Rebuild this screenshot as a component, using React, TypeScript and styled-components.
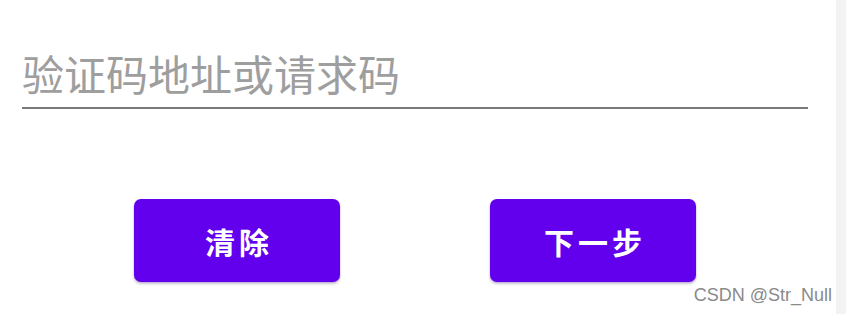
import React from "react";
import styled, { createGlobalStyle } from "styled-components";

const GlobalStyle = createGlobalStyle`
  html, body {
    margin: 0;
    padding: 0;
    background: #ffffff;
  }
  body {
    font-family: "Roboto", "Noto Sans CJK SC", sans-serif;
  }
`;

const App: React.FC = () => {
  return (
    <>
      <GlobalStyle />
      <Page>
        <Screen>
          <Field>
            <Placeholder>验证码地址或请求码</Placeholder>
            <Underline />
          </Field>
          <ButtonRow>
            <ActionButton>清除</ActionButton>
            <ActionButton>下一步</ActionButton>
          </ButtonRow>
          <Watermark>CSDN @Str_Null</Watermark>
        </Screen>
        <Scrollbar />
      </Page>
    </>
  );
};

export default App;

const Page = styled.div`
  display: flex;
  width: 846px;
  height: 314px;
  overflow: hidden;
`;

const Screen = styled.div`
  position: relative;
  flex: 1;
  display: flex;
  flex-direction: column;
  background: #ffffff;
`;

const Scrollbar = styled.div`
  width: 10px;
  background: #f3f3f3;
`;

const Field = styled.div`
  margin: 49px 0 0 22px;
  width: 786px;
`;

const Placeholder = styled.div`
  font-family: "Noto Sans CJK SC", sans-serif;
  font-size: 42px;
  line-height: 48px;
  color: #9e9e9e;
  padding-bottom: 10px;
`;

const Underline = styled.div`
  height: 2px;
  background: #7a7a7a;
`;

const ButtonRow = styled.div`
  display: flex;
  gap: 150px;
  padding-left: 134px;
  margin-top: 90px;
`;

const ActionButton = styled.button`
  width: 206px;
  height: 83px;
  border: none;
  border-radius: 7px;
  background: #6200ee;
  color: #ffffff;
  font-family: "Noto Sans CJK SC", sans-serif;
  font-size: 30px;
  font-weight: 700;
  letter-spacing: 4px;
  padding: 0 0 0 4px;
  box-shadow: 0 2px 3px rgba(0, 0, 0, 0.18), 0 1px 2px rgba(98, 0, 238, 0.2);
  cursor: pointer;
`;

const Watermark = styled.div`
  position: absolute;
  right: 4px;
  bottom: 8px;
  font-family: "Liberation Sans", Arial, sans-serif;
  font-size: 18px;
  color: #8a8a8a;
  text-shadow: 0 0 1px #ffffff;
`;
